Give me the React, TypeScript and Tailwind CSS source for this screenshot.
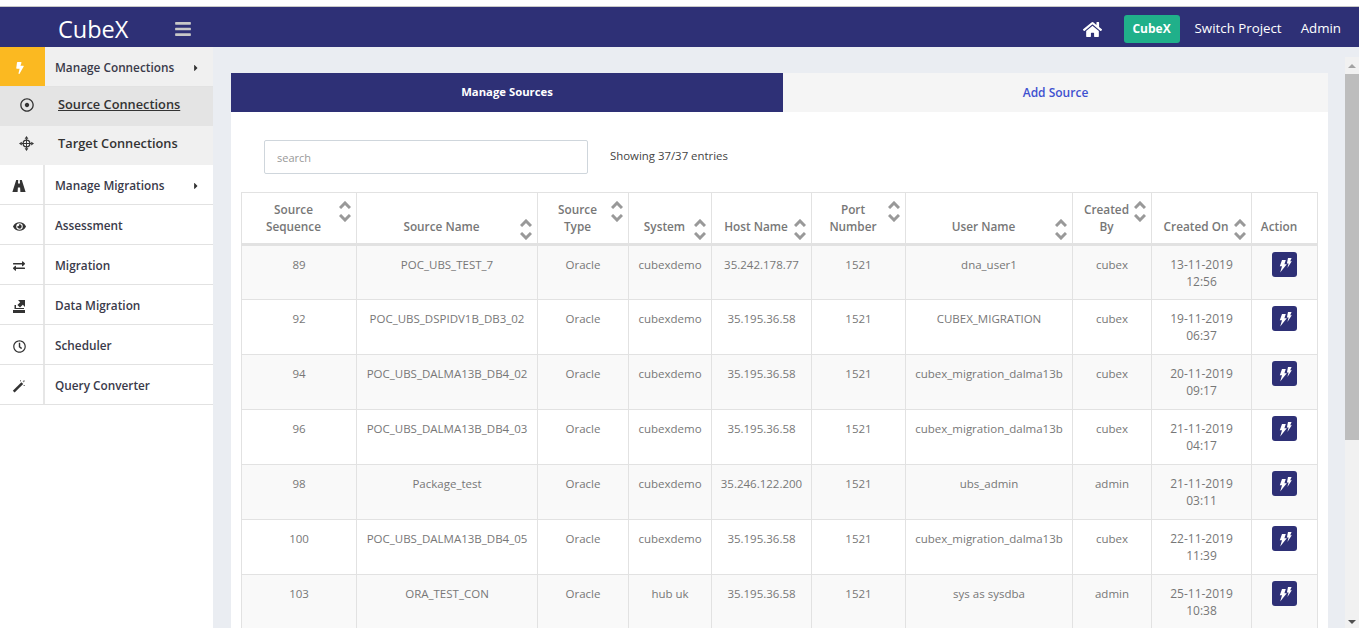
import { FaBars, FaBolt, FaCaretRight, FaExchangeAlt, FaEye, FaHome, FaRegClock, FaRegDotCircle } from "react-icons/fa";

const rows = [
  ["89", "POC_UBS_TEST_7", "Oracle", "cubexdemo", "35.242.178.77", "1521", "dna_user1", "cubex", "13-11-2019", "12:56"],
  ["92", "POC_UBS_DSPIDV1B_DB3_02", "Oracle", "cubexdemo", "35.195.36.58", "1521", "CUBEX_MIGRATION", "cubex", "19-11-2019", "06:37"],
  ["94", "POC_UBS_DALMA13B_DB4_02", "Oracle", "cubexdemo", "35.195.36.58", "1521", "cubex_migration_dalma13b", "cubex", "20-11-2019", "09:17"],
  ["96", "POC_UBS_DALMA13B_DB4_03", "Oracle", "cubexdemo", "35.195.36.58", "1521", "cubex_migration_dalma13b", "cubex", "21-11-2019", "04:17"],
  ["98", "Package_test", "Oracle", "cubexdemo", "35.246.122.200", "1521", "ubs_admin", "admin", "21-11-2019", "03:11"],
  ["100", "POC_UBS_DALMA13B_DB4_05", "Oracle", "cubexdemo", "35.195.36.58", "1521", "cubex_migration_dalma13b", "cubex", "22-11-2019", "11:39"],
  ["103", "ORA_TEST_CON", "Oracle", "hub uk", "35.195.36.58", "1521", "sys as sysdba", "admin", "25-11-2019", "10:38"],
];

const headers = [
  { label: ["Source", "Sequence"], w: "w-[115px]" },
  { label: ["Source Name"], w: "w-[181px]" },
  { label: ["Source", "Type"], w: "w-[91px]" },
  { label: ["System"], w: "w-[83px]" },
  { label: ["Host Name"], w: "w-[100px]" },
  { label: ["Port", "Number"], w: "w-[94px]" },
  { label: ["User Name"], w: "w-[167px]" },
  { label: ["Created", "By"], w: "w-[79px]" },
  { label: ["Created On"], w: "w-[100px]" },
  { label: ["Action"], w: "w-[66px]" },
];

function TargetIcon() {
  return (
    <svg viewBox="0 0 16 16" className="h-[15px] w-[15px]" fill="currentColor">
      <path d="M8 0 10 3H6ZM8 16l-2-3h4ZM0 8l3-2v4ZM16 8l-3 2V6Z" />
      <circle cx="8" cy="8" r="3.6" fill="none" stroke="currentColor" strokeWidth="1.3" />
      <path d="M7.5 3h1v10h-1ZM3 7.5h10v1H3Z" />
    </svg>
  );
}

function RoadIcon() {
  return (
    <svg viewBox="0 0 14 14" className="h-[14px] w-[14px]" fill="currentColor">
      <path d="M4.2 1H6.2L6 4.5H8L7.8 1H9.8L13.6 13H8.4L8.1 8.5H5.9L5.6 13H.4Z" />
    </svg>
  );
}

function TrayIcon() {
  return (
    <svg viewBox="0 0 14 14" className="h-[14px] w-[14px]" fill="currentColor">
      <path d="M6 1h7v7l-2.2-2.2L8 8.6 5.4 6 8.2 3.2Z" />
      <path d="M2.5 6H4v3h8v1H2.5Z" />
      <path d="M1 11h12v3H1Z" />
    </svg>
  );
}

function WandIcon() {
  return (
    <svg viewBox="0 0 14 14" className="h-[14px] w-[14px]" fill="currentColor">
      <path d="M9.4 3.2 11.2 5 2.6 13.6.8 11.8Z" />
      <path d="M8 1h1v1.5H8ZM12 1l1 1-1.4 1.4-1-1ZM11.5 6H13v1h-1.5Z" opacity=".6" />
    </svg>
  );
}

function DoubleBolt() {
  return (
    <svg viewBox="0 0 16 16" className="h-4 w-4" fill="#fff">
      <path d="M5 3h3.8L7.4 7.2h2.4L3.2 15.5l1.8-6.3H2.8Z" />
      <path d="M11 1h3.6l-1.4 3.2h1.6L10.4 11l1.2-4.6h-1.7Z" />
    </svg>
  );
}

function MenuRow({ icon, label, caret, active }: { icon: React.ReactNode; label: string; caret?: boolean; active?: boolean }) {
  return (
    <div className={`flex h-10 items-stretch border-b border-[#e2e2e2] ${active ? "bg-[#f0f0f0]" : "bg-white"}`}>
      <div className={`flex w-[45px] shrink-0 items-center justify-center pr-[5px] pt-[3px] text-[13px] ${active ? "bg-[#fbb921] text-white" : "border-r-2 border-[#e6e6e6] text-[#333]"}`}>
        {icon}
      </div>
      <div className="flex flex-1 items-center justify-between pl-[10px] pr-[12px] pt-[3px] text-[11.8px] font-semibold text-[#3a3a4a]">
        <span>{label}</span>
        {caret && <FaCaretRight className="text-[10px] text-[#333]" />}
      </div>
    </div>
  );
}

function SubRow({ icon, label, active }: { icon: React.ReactNode; label: string; active?: boolean }) {
  return (
    <div className={`flex h-[39px] items-center pb-[4px] ${active ? "bg-[#e4e4e4]" : "bg-[#f0f0f0]"}`}>
      <div className="flex w-[53px] shrink-0 items-center justify-center text-[14px] text-[#333]">{icon}</div>
      <span className={`pl-[5px] text-[12.8px] font-semibold text-[#333] ${active ? "underline" : ""}`}>{label}</span>
    </div>
  );
}

function Sort({ multi }: { multi: boolean }) {
  return (
    <span className={`absolute right-[5px] flex flex-col gap-[5px] ${multi ? "top-[7px]" : "top-[25px]"}`}>
      <svg viewBox="0 0 12 8" className="h-2 w-3" fill="none" stroke="#999" strokeWidth="3">
        <path d="M1 7 6 2l5 5" />
      </svg>
      <svg viewBox="0 0 12 8" className="h-2 w-3" fill="none" stroke="#999" strokeWidth="3">
        <path d="M1 1l5 5 5-5" />
      </svg>
    </span>
  );
}

export default function App() {
  return (
    <div className="flex h-[628px] flex-col overflow-hidden bg-white font-['Open_Sans',sans-serif]">
      {/* top strip */}
      <div className="h-[7px] shrink-0 border-b border-[#c8c8c8] bg-white" />

      <header className="flex h-10 shrink-0 items-center justify-between bg-[#2e3076] pr-[18px] pt-1 text-white">
        <div className="flex items-center">
          <span className="mt-[1px] pl-[58px] text-[23.5px] leading-none">CubeX</span>
          <FaBars className="ml-[46px] text-[18px] text-[#c8c8c8]" />
        </div>
        <div className="flex items-center">
          <FaHome className="text-[19px]" />
          <span className="ml-[22px] flex h-7 w-[56px] items-center justify-center rounded-[3px] bg-[#20b08a] text-[12px] font-bold">CubeX</span>
          <span className="ml-[15px] text-[13.3px]">Switch Project</span>
          <span className="ml-[19px] text-[13.3px]">Admin</span>
        </div>
      </header>

      <div className="flex min-h-0 flex-1">
        <aside className="w-[213px] shrink-0 bg-white">
          <MenuRow active icon={<FaBolt className="text-[12px]" />} label="Manage Connections" caret />
          <SubRow active icon={<FaRegDotCircle />} label="Source Connections" />
          <SubRow icon={<TargetIcon />} label="Target Connections" />
          <MenuRow icon={<RoadIcon />} label="Manage Migrations" caret />
          <MenuRow icon={<FaEye />} label="Assessment" />
          <MenuRow icon={<FaExchangeAlt className="text-[12px]" />} label="Migration" />
          <MenuRow icon={<TrayIcon />} label="Data Migration" />
          <MenuRow icon={<FaRegClock />} label="Scheduler" />
          <MenuRow icon={<WandIcon />} label="Query Converter" />
        </aside>

        <main className="flex min-w-0 flex-1 bg-[#eaedf2]">
          <div className="min-w-0 flex-1 pl-[18px] pr-[17px] pt-[26px]">
            <div className="bg-white">
              <div className="flex h-[39px]">
                <div className="flex w-[552px] items-center justify-center bg-[#2e3076] text-[11.3px] font-bold text-white">Manage Sources</div>
                <div className="flex flex-1 items-center justify-center bg-[#f5f5f5] text-[12px] font-semibold text-[#3f51d0]">Add Source</div>
              </div>

              <div className="flex items-center pl-[33px] pt-[28px]">
                <input
                  placeholder="search"
                  className="h-[34px] w-[324px] rounded-[2px] border border-[#cfd6dc] bg-white px-3 text-[11px] outline-none placeholder:text-[#999]"
                />
                <span className="mb-[2px] ml-[22px] text-[11.4px] text-[#444]">Showing 37/37 entries</span>
              </div>

              <div className="px-[10px] pt-[18px]">
                <table className="w-[1076px] table-fixed border-collapse text-center text-[11.5px]">
                  <thead>
                    <tr className="h-[52px] border-b-[3px] border-[#e2e2e2]">
                      {headers.map((h) => (
                        <th key={h.label.join(" ")} className={`${h.w} border border-[#e2e2e2] p-0 align-bottom text-[11.8px] font-semibold text-[#777]`}>
                          <div className="relative flex h-[49px] items-end justify-center pb-[8px] pr-[11px]">
                            <span className="leading-[17px]">
                              {h.label.map((l) => (
                                <span key={l} className="block">{l}</span>
                              ))}
                            </span>
                            {h.label[0] !== "Action" && <Sort multi={h.label.length > 1} />}
                          </div>
                        </th>
                      ))}
                    </tr>
                  </thead>
                  <tbody className="text-[#777]">
                    {rows.map((r, i) => (
                      <tr key={r[0]} className={`h-[55px] ${i % 2 === 0 ? "bg-[#f9f9f9]" : "bg-white"}`}>
                        {r.slice(0, 8).map((c, j) => (
                          <td key={j} className="border border-[#e2e2e2] px-0 pb-0 pt-[10px] align-top leading-[17px]">{c}</td>
                        ))}
                        <td className="border border-[#e2e2e2] px-0 pb-0 pt-[10px] align-top text-[12px] leading-[17px]">
                          {r[8]}
                          <br />
                          {r[9]}
                        </td>
                        <td className="border border-[#e2e2e2] pb-0 pl-[20px] pr-0 pt-[6px] align-top">
                          <span className="flex h-[25px] w-[25px] items-center justify-center rounded-[3px] bg-[#2e3076]">
                            <DoubleBolt />
                          </span>
                        </td>
                      </tr>
                    ))}
                  </tbody>
                </table>
              </div>
            </div>
          </div>

          {/* scrollbar */}
          <div className="mt-[10px] flex w-[14px] shrink-0 flex-col bg-[#f1f1f1]">
            <div className="flex h-[17px] items-center justify-center">
              <span className="h-0 w-0 border-x-[4px] border-b-[4px] border-x-transparent border-b-[#a3a3a3]" />
            </div>
            <div className="h-[366px] bg-[#bdbdbd]" />
            <div className="flex-1" />
            <div className="flex h-[12px] items-center justify-center">
              <span className="h-0 w-0 border-x-[4px] border-t-[4px] border-x-transparent border-t-[#505050]" />
            </div>
          </div>
        </main>
      </div>
    </div>
  );
}
